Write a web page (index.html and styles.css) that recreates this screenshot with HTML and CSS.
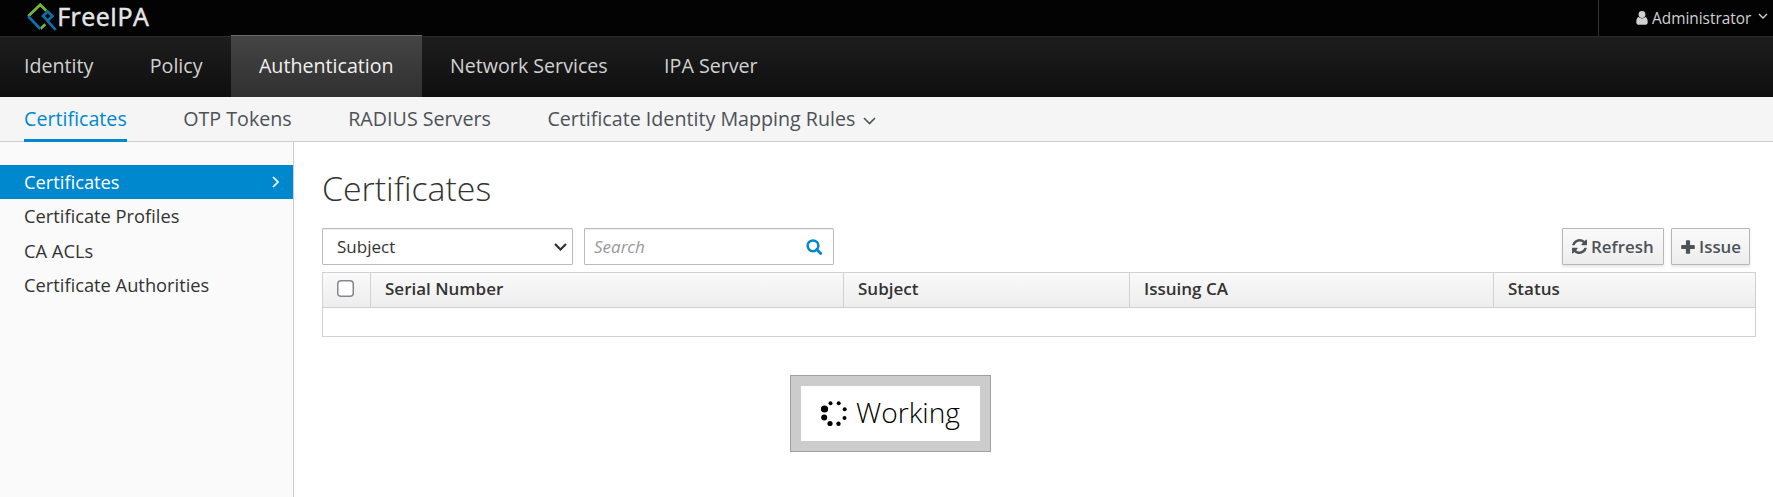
FILE: index.html
```html
<!DOCTYPE html>
<html lang="en">
<head>
<meta charset="utf-8">
<title>Identity Management</title>
<link rel="stylesheet" href="styles.css">
</head>
<body>
<header class="topbar">
  <div class="brand">
    <svg class="brand-mark" width="32" height="31" viewBox="0 0 32 31" fill="none" stroke-width="2.700">
      <path d="M3.200 15.300 15.300 3.700l6 6M15.500 27.800l4.800-4.500" stroke="#74b53a"/>
      <path d="M3.200 15.300 15.300 28M18 15l4.700-4.400 4.700 4.400-4.700 4.600zM22 19.300l8.700 9.500" stroke="#0f6fa8"/>
    </svg>
    <span class="brand-name">FreeIPA</span>
  </div>
  <div class="user">
    <svg class="user-icon" width="12" height="14" viewBox="0 0 12 14" fill="#d1d1d1"><circle cx="6" cy="3.500" r="3.400"/><path d="M2.600 6C1 6.300.3 8.500.3 11c0 2 .7 2.700 2 2.700h7.400c1.300 0 2-.7 2-2.700 0-2.500-.7-4.700-2.300-5-1.900 1.900-4.900 1.900-6.800 0z"/></svg>
    <span class="user-name">Administrator</span>
    <svg class="user-caret" width="10" height="6" viewBox="0 0 10 6" fill="none" stroke="#d1d1d1" stroke-width="1.400"><path d="M1 1l4 4 4-4"/></svg>
  </div>
</header>
<nav class="nav">
  <a class="nav-item">Identity</a>
  <a class="nav-item">Policy</a>
  <a class="nav-item nav-active">Authentication</a>
  <a class="nav-item">Network Services</a>
  <a class="nav-item">IPA Server</a>
</nav>
<nav class="subnav">
  <a class="sub sub-active">Certificates</a>
  <a class="sub">OTP Tokens</a>
  <a class="sub">RADIUS Servers</a>
  <a class="sub">Certificate Identity Mapping Rules <svg class="sub-caret" width="13" height="8" viewBox="0 0 13 8" fill="none" stroke="#4d5258" stroke-width="1.600"><path d="M1 1l5.500 5.500L12 1"/></svg></a>
</nav>
<div class="body">
  <aside class="side">
    <a class="side-item side-active">Certificates <svg width="7" height="12" viewBox="0 0 7 12" fill="none" stroke="#fff" stroke-width="1.700"><path d="M1 1l5 5-5 5"/></svg></a>
    <a class="side-item">Certificate Profiles</a>
    <a class="side-item">CA ACLs</a>
    <a class="side-item">Certificate Authorities</a>
  </aside>
  <main class="main">
    <h1 class="title">Certificates</h1>
    <div class="toolbar">
      <div class="field select"><span>Subject</span><svg width="13" height="8" viewBox="0 0 13 8" fill="none" stroke="#333" stroke-width="2.200"><path d="M1 1l5.500 5.500L12 1"/></svg></div>
      <div class="field search"><span class="hint">Search</span><svg width="16" height="16" viewBox="0 0 16 16" fill="none" stroke="#0088ce"><circle cx="7" cy="6.800" r="5.400" stroke-width="2.500"/><path d="M10.700 10.500l4 4" stroke-width="2.800" stroke-linecap="round"/></svg></div>
      <div class="actions">
        <div class="btn refresh"><svg width="15" height="15" viewBox="0 0 1536 1536" fill="#4d5258"><path d="M1511 928q0 5-1 7-64 268-268 434.500T764 1536q-146 0-282.500-55T238 1324l-129 129q-19 19-45 19t-45-19-19-45V960q0-26 19-45t45-19h448q26 0 45 19t19 45-19 45l-137 137q71 66 161 102t187 36q134 0 250-65t186-179q11-17 53-117 8-23 30-23h192q13 0 22.500 9.500t9.500 22.500zm25-800v448q0 26-19 45t-45 19h-448q-26 0-45-19t-19-45 19-45l138-138Q969 256 768 256q-134 0-250 65T332 500q-11 17-53 117-8 23-30 23H50q-13 0-22.500-9.500T18 608v-7q65-268 270-434.500T768 0q146 0 284 55.500T1297 212l130-129q19-19 45-19t45 19 19 45z"/></svg><span>Refresh</span></div>
        <div class="btn issue"><svg width="14" height="14" viewBox="0 0 14 14" fill="#4d5258"><path d="M5.800.2h2.400q.9 0 .9.900v3.900h3.800q.9 0 .9.900v2.300q0 .9-.9.900H9.100v3.800q0 .9-.9.900H5.800q-.9 0-.9-.9V9.100H1.100q-.9 0-.9-.9V5.900q0-.9.900-.9h3.800V1.100q0-.9.900-.9z"/></svg><span>Issue</span></div>
      </div>
    </div>
    <div class="table">
      <div class="thead">
        <div class="th"><span class="check"></span></div>
        <div class="th">Serial Number</div>
        <div class="th">Subject</div>
        <div class="th">Issuing CA</div>
        <div class="th">Status</div>
      </div>
      <div class="tbody"></div>
    </div>
    <div class="working">
      <svg width="28" height="28" viewBox="0 0 28 28"><circle cx="4.500" cy="9" r="3.600"/><circle cx="4.200" cy="17.500" r="3"/><circle cx="10" cy="23.500" r="2.600"/><circle cx="18.500" cy="23.700" r="2.200"/><circle cx="24.500" cy="18" r="2"/><circle cx="24.700" cy="9.300" r="2"/><circle cx="18.700" cy="3.300" r="2"/><circle cx="10.500" cy="3.200" r="2"/></svg>
      <span class="working-text">Working</span>
    </div>
  </main>
</div>
</body>
</html>
```
FILE: styles.css
```css
* { box-sizing: border-box; }
body { margin: 0; height: 497px; overflow: hidden; display: flex; flex-direction: column; font-family: "Open Sans", sans-serif; font-size: 16px; color: #333; background: #fff; }
svg { flex: none; }
.topbar { height: 36px; flex: none; background: #030303; display: flex; justify-content: space-between; }
.brand { display: flex; padding: 1px 0 0 25px; }
.brand-name { color: #e6e6e6; font-size: 25px; line-height: 31px; letter-spacing: 0.4px; margin-left: .3px; -webkit-text-stroke: .5px #e6e6e6; }
.user { width: 175px; border-left: 1px solid #333; display: flex; align-items: center; padding-left: 37px; color: #d1d1d1; font-size: 15.400px; }
.user-name { margin-left: 4px; line-height: 35px; }
.user-icon { margin-top: -1px; }
.user-caret { margin: -4px 0 0 7px; }
.nav { height: 61px; flex: none; display: flex; border-top: 1px solid #2b2b2b; background: linear-gradient(#1d1d1d, #0f0f0f); }
.nav-item { padding: 0 28.200px; line-height: 57px; font-size: 19.650px; color: #d1d1d1; }
.nav-item:first-child { padding-left: 24px; }
.nav-active { margin-top: -2px; border-top: 1px solid #6a6a6a; background: linear-gradient(#444, #303030); color: #f1f1f1; line-height: 59px; }
.subnav { height: 45px; flex: none; display: flex; gap: 56.500px; padding-left: 24px; background: #f5f5f5; border-bottom: 1px solid #cecdcd; }
.sub { height: 45px; line-height: 44px; font-size: 19.670px; color: #4d5258; white-space: nowrap; }
.sub-active { color: #0088ce; border-bottom: 3px solid #0088ce; }
.sub-caret { margin-left: 2px; vertical-align: 1px; }
.body { flex: 1; display: flex; }
.side { width: 294px; flex: none; padding-top: 23px; background: #fafafa; border-right: 1px solid #cecece; }
.side-item { height: 34.500px; line-height: 33px; padding: 0 14px 1px 24px; font-size: 18.300px; display: flex; justify-content: space-between; align-items: center; }
.side-active { height: 34px; background: #0088ce; color: #fff; }
.main { flex: 1; padding: 26px 17px 0 28px; }
.title { margin: 0; height: 60px; line-height: 41px; font-size: 33.850px; font-weight: 300; }
.toolbar { display: flex; height: 37px; }
.field { height: 37px; border: 1px solid #bbb; border-radius: 1px; box-shadow: inset 0 1px 1px rgba(0,0,0,.075); display: flex; justify-content: space-between; align-items: center; font-size: 17px; }
.select { width: 251px; padding: 0 5px 0 14px; }
.search { width: 250px; margin-left: 11px; padding: 0 11px 0 9px; }
.hint { font-style: italic; color: #999; }
.actions { margin-left: auto; display: flex; gap: 7px; padding-right: 6px; }
.btn { height: 37px; border: 1px solid #b7b7b7; border-radius: 1px; background: linear-gradient(#fafafa, #ededed); box-shadow: 0 2px 3px rgba(3,3,3,.1); display: flex; align-items: center; gap: 4px; padding-left: 9px; color: #4d5258; font-size: 16.900px; font-weight: 560; }
.refresh { width: 102px; }
.issue { width: 79px; }
.table { margin-top: 7px; border: 1px solid #d1d1d1; }
.thead { height: 35px; display: grid; grid-template-columns: 48px 473px 286px 364px 1fr; border-bottom: 1px solid #d1d1d1; background: linear-gradient(#fafafa, #ededed); }
.th { padding-left: 14px; line-height: 32px; font-size: 17px; font-weight: 600; border-right: 1px solid #d1d1d1; }
.th:last-child { border-right: 0; }
.check { display: block; width: 17px; height: 17px; margin-top: 7px; box-shadow: inset 0 0 0 1.500px #85858f; border-radius: 4px; background: #fff; }
.tbody { height: 28px; }
.working { position: absolute; left: 790px; top: 375px; width: 201px; height: 77px; border: 1px solid #a0a0a0; background: #fff; box-shadow: inset 0 0 0 10px #ccc; display: flex; align-items: center; padding-left: 29px; gap: 8px; font-size: 28.200px; font-weight: 300; color: #000; }
.working-text { margin-top: -4px; }
```
